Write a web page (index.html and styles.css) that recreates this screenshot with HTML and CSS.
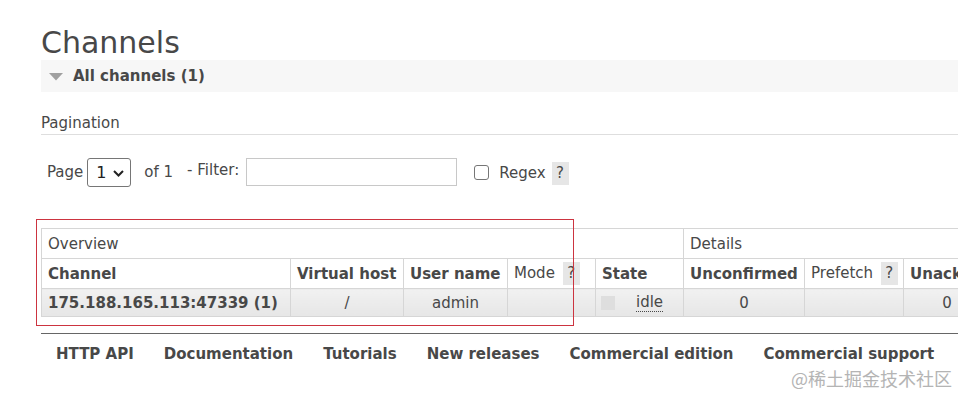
FILE: index.html
```html
<!DOCTYPE html>
<html>
<head>
<meta charset="utf-8">
<link rel="stylesheet" href="styles.css">
</head>
<body>
<div class="page">
  <h1 class="title">Channels</h1>
  <div class="section-bar">
    <svg class="tri" width="14" height="8" viewBox="0 0 14 8"><path d="M0 0 L14 0 L7 7.5 Z" fill="#a0a0a0"/></svg>
    <span class="section-title">All channels (1)</span>
  </div>
  <div class="pagination-head">Pagination</div>
  <div class="controls">
    <span class="lbl">Page</span>
    <span class="select-wrap">
      <select class="select"><option>1</option></select>
      <svg class="chev" width="11" height="7" viewBox="0 0 11 7"><path d="M1 1 L5.5 5.5 L10 1" fill="none" stroke="#222" stroke-width="2"/></svg>
    </span>
    <span class="lbl of">of 1</span>
    <span class="lbl filter">- Filter:</span>
    <input class="filter-input" type="text">
    <input class="check" type="checkbox">
    <span class="lbl regex">Regex</span>
    <span class="help">?</span>
  </div>

  <table class="list">
    <colgroup>
      <col class="c-ch"><col class="c-vh"><col class="c-un"><col class="c-mo"><col class="c-st">
      <col class="c-uc"><col class="c-pf"><col class="c-ua"><col class="c-x">
    </colgroup>
    <tr class="group">
      <th colspan="5" class="norm">Overview</th>
      <th colspan="4" class="norm">Details</th>
    </tr>
    <tr class="heads">
      <th>Channel</th>
      <th>Virtual host</th>
      <th>User name</th>
      <th class="norm">Mode <span class="help">?</span></th>
      <th>State</th>
      <th>Unconfirmed</th>
      <th class="norm">Prefetch <span class="help">?</span></th>
      <th>Unacked</th>
      <th>Publish</th>
    </tr>
    <tr class="data">
      <td class="b">175.188.165.113:47339 (1)</td>
      <td class="c">/</td>
      <td class="c">admin</td>
      <td></td>
      <td><span class="state"><span class="sq"></span><abbr>idle</abbr></span></td>
      <td class="c">0</td>
      <td></td>
      <td class="c">0</td>
      <td></td>
    </tr>
  </table>

  <div class="footer">
    <a>HTTP API</a>
    <a>Documentation</a>
    <a>Tutorials</a>
    <a>New releases</a>
    <a>Commercial edition</a>
    <a>Commercial support</a>
  </div>
</div>
<div class="annot"></div>
<div class="watermark">@稀土掘金技术社区</div>
</body>
</html>
```

FILE: styles.css
```css
html, body {
  margin: 0;
  padding: 0;
  overflow: hidden;
  background: #fff;
}
body {
  font-family: "DejaVu Sans", Verdana, sans-serif;
  color: #484848;
  font-size: 15px;
  width: 958px;
  height: 395px;
  position: relative;
}
.page {
  padding: 26px 0 0 41px;
}
.title {
  margin: 0;
  font-size: 30px;
  line-height: 34px;
  font-weight: normal;
  color: #484848;
}
.section-bar {
  height: 32px;
  background: #f7f7f7;
  display: flex;
  align-items: center;
}
.tri {
  margin-left: 8px;
  margin-right: 10px;
  margin-top: 1px;
}
.section-title {
  font-weight: bold;
  font-size: 15px;
}
.pagination-head {
  margin-top: 22px;
  line-height: 18px;
  padding-bottom: 2px;
  border-bottom: 1px solid #dedede;
}
.controls {
  margin-top: 22px;
  height: 30px;
  display: flex;
  align-items: center;
  padding-left: 6px;
}
.lbl { line-height: 18px; }
.select-wrap {
  position: relative;
  margin-left: 4px;
  display: inline-block;
  height: 29px;
}
.select {
  appearance: none;
  -webkit-appearance: none;
  width: 44px;
  height: 29px;
  border: 1px solid #767676;
  border-radius: 3px;
  background: #fff;
  font-family: "DejaVu Sans", Verdana, sans-serif;
  font-size: 16px;
  color: #222;
  padding: 0 0 0 8px;
  margin: 0;
}
.chev {
  position: absolute;
  right: 7px;
  top: 12px;
  pointer-events: none;
}
.of { margin-left: 13px; }
.filter { margin-left: 14px; margin-top: -4px; }
.filter-input {
  margin: 0 0 0 7px;
  width: 211px;
  height: 28px;
  box-sizing: border-box;
  border: 1px solid #c8c8c8;
  padding: 0;
}
.check {
  appearance: none;
  -webkit-appearance: none;
  width: 15px;
  height: 15px;
  border: 1px solid #767676;
  border-radius: 3px;
  margin: 1px 0 0 17px;
  background: #fff;
}
.regex { margin-left: 10px; margin-top: 2px; }
.help {
  display: inline-block;
  background: #e6e6e6;
  width: 17px;
  height: 23px;
  line-height: 23px;
  text-align: center;
  font-weight: normal;
  color: #484848;
  font-size: 15px;
}
.controls .help { margin-left: 6px; margin-top: 2px; }

.list {
  margin-top: 41px;
  border-collapse: collapse;
  table-layout: fixed;
  width: 1040px;
}
.c-ch { width: 249px; }
.c-vh { width: 113px; }
.c-un { width: 104px; }
.c-mo { width: 88px; }
.c-st { width: 88px; }
.c-uc { width: 121px; }
.c-pf { width: 99px; }
.c-ua { width: 87px; }
.c-x { width: 91px; }
.list th, .list td {
  border: 1px solid #d6d6d6;
  padding: 0 6px;
  text-align: left;
  white-space: nowrap;
  overflow: hidden;
}
.list th {
  height: 29px;
  font-weight: bold;
  background: #fff;
}
.list th.norm { font-weight: normal; }
.heads .help { margin-left: 3px; vertical-align: middle; }
.list td {
  height: 27px;
  background: linear-gradient(#f1f1f1, #e6e6e6);
}
.list td.b { font-weight: bold; }
.list td.c { text-align: center; }
.state {
  display: flex;
  align-items: center;
}
.sq {
  width: 14px;
  height: 14px;
  background: #dedede;
  margin-left: -1px;
  margin-right: 21px;
}
abbr {
  text-decoration: none;
  border-bottom: 1px dotted #484848;
  line-height: 17px;
}

.footer {
  margin-top: 16px;
  border-top: 1px solid #666;
  padding: 10px 0 0 0;
  display: flex;
  line-height: 20px;
}
.footer a {
  font-weight: bold;
  padding: 0 15px;
  color: #484848;
  text-decoration: none;
  white-space: nowrap;
}
.annot {
  position: absolute;
  left: 36px;
  top: 219px;
  width: 536px;
  height: 105px;
  border: 1px solid #cc3440;
}
.watermark {
  position: absolute;
  left: 791px;
  top: 366px;
  font-family: "Noto Sans CJK SC", sans-serif;
  font-size: 18px;
  line-height: 24px;
  color: #b4b4b4;
  white-space: nowrap;
}
```
